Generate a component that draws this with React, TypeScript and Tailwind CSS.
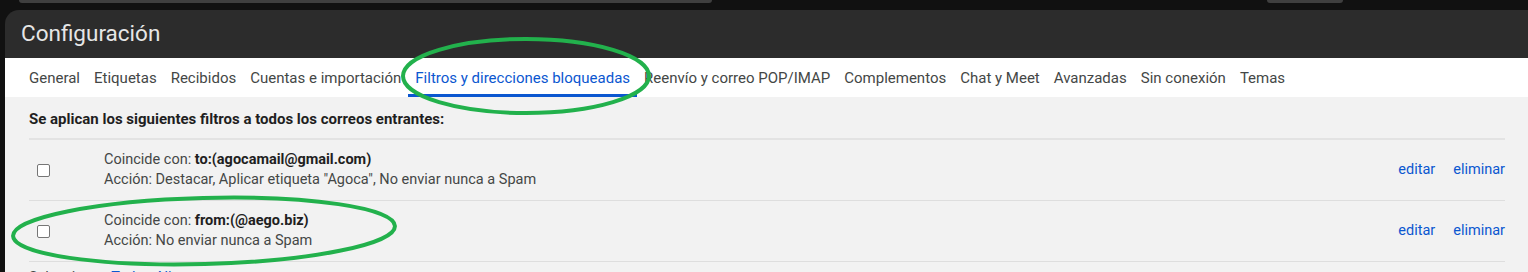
import React from 'react';

const tabs = [
  'General',
  'Etiquetas',
  'Recibidos',
  'Cuentas e importación',
  'Filtros y direcciones bloqueadas',
  'Reenvío y correo POP/IMAP',
  'Complementos',
  'Chat y Meet',
  'Avanzadas',
  'Sin conexión',
  'Temas',
];

const filters = [
  {
    match: 'to:(agocamail@gmail.com)',
    action: 'Destacar, Aplicar etiqueta "Agoca", No enviar nunca a Spam',
  },
  {
    match: 'from:(@aego.biz)',
    action: 'No enviar nunca a Spam',
  },
];

function Checkbox() {
  return <div className="size-[13px] rounded-[2px] border border-[#767676] bg-white" />;
}

export default function App() {
  return (
    <div className="relative h-[272px] w-[1528px] overflow-hidden bg-[#111111] font-['Roboto',sans-serif]">
      {/* bottoms of the search bar / top controls */}
      <div className="flex h-[10px]">
        <div className="ml-[19px] h-[3px] w-[693px] rounded-b-[8px] bg-[#3f3f3f]" />
        <div className="ml-[555px] h-[3px] w-[76px] rounded-b-[8px] bg-[#3f3f3f]" />
      </div>

      <div className="ml-[5px] overflow-hidden rounded-tl-[14px] bg-[#2c2c2c]">
        {/* Header */}
        <div className="flex h-[48px] items-center pl-4 text-[22.5px] text-[#e6e6e6]">Configuración</div>

        {/* Tabs */}
        <div className="flex h-[39px] items-stretch bg-white pl-[17px] text-[15px] text-[#444746]">
          {tabs.map((t) => {
            const active = t === 'Filtros y direcciones bloqueadas';
            return (
              <div
                key={t}
                className={`flex items-center px-[7px] pt-[4px] ${
                  active ? 'border-b-[3px] border-[#0b57d0] text-[#0b57d0]' : 'border-b-[3px] border-transparent'
                }`}
              >
                {t}
              </div>
            );
          })}
        </div>

        {/* Content */}
        <div className="bg-[#f2f2f2] pl-6 pr-[23px] text-[14.5px]">
          <div className="border-b-2 border-[#e3e3e3] pb-[9px] pt-3 text-[15px] font-bold leading-5 text-[#1f1f1f]">
            Se aplican los siguientes filtros a todos los correos entrantes:
          </div>
          {filters.map((f) => (
            <div key={f.match} className="flex h-[61px] items-center border-b border-[#dedede] text-[#444746]">
              <div className="w-[75px] pl-2">
                <Checkbox />
              </div>
              <div className="flex-1 leading-5">
                <div>
                  Coincide con: <span className="font-bold text-[#1f1f1f]">{f.match}</span>
                </div>
                <div>Acción: {f.action}</div>
              </div>
              <div className="flex gap-[18px] text-[#0b57d0]">
                <span>editar</span>
                <span>eliminar</span>
              </div>
            </div>
          ))}
          <div className="pt-[6px] leading-5 text-[#444746]">
            Seleccionar: <span className="text-[#0b57d0]">Todos</span>, <span className="text-[#0b57d0]">Ninguno</span>
          </div>
        </div>
      </div>

      {/* hand-drawn highlight annotations */}
      <svg className="pointer-events-none absolute left-0 top-0" width="1528" height="272">
        <ellipse cx="526" cy="76" rx="123" ry="37" fill="none" stroke="#22b14c" strokeWidth="4" />
        <ellipse
          cx="204"
          cy="231"
          rx="191"
          ry="33"
          fill="none"
          stroke="#22b14c"
          strokeWidth="4"
          transform="rotate(-1.5 204 231)"
        />
      </svg>
    </div>
  );
}
